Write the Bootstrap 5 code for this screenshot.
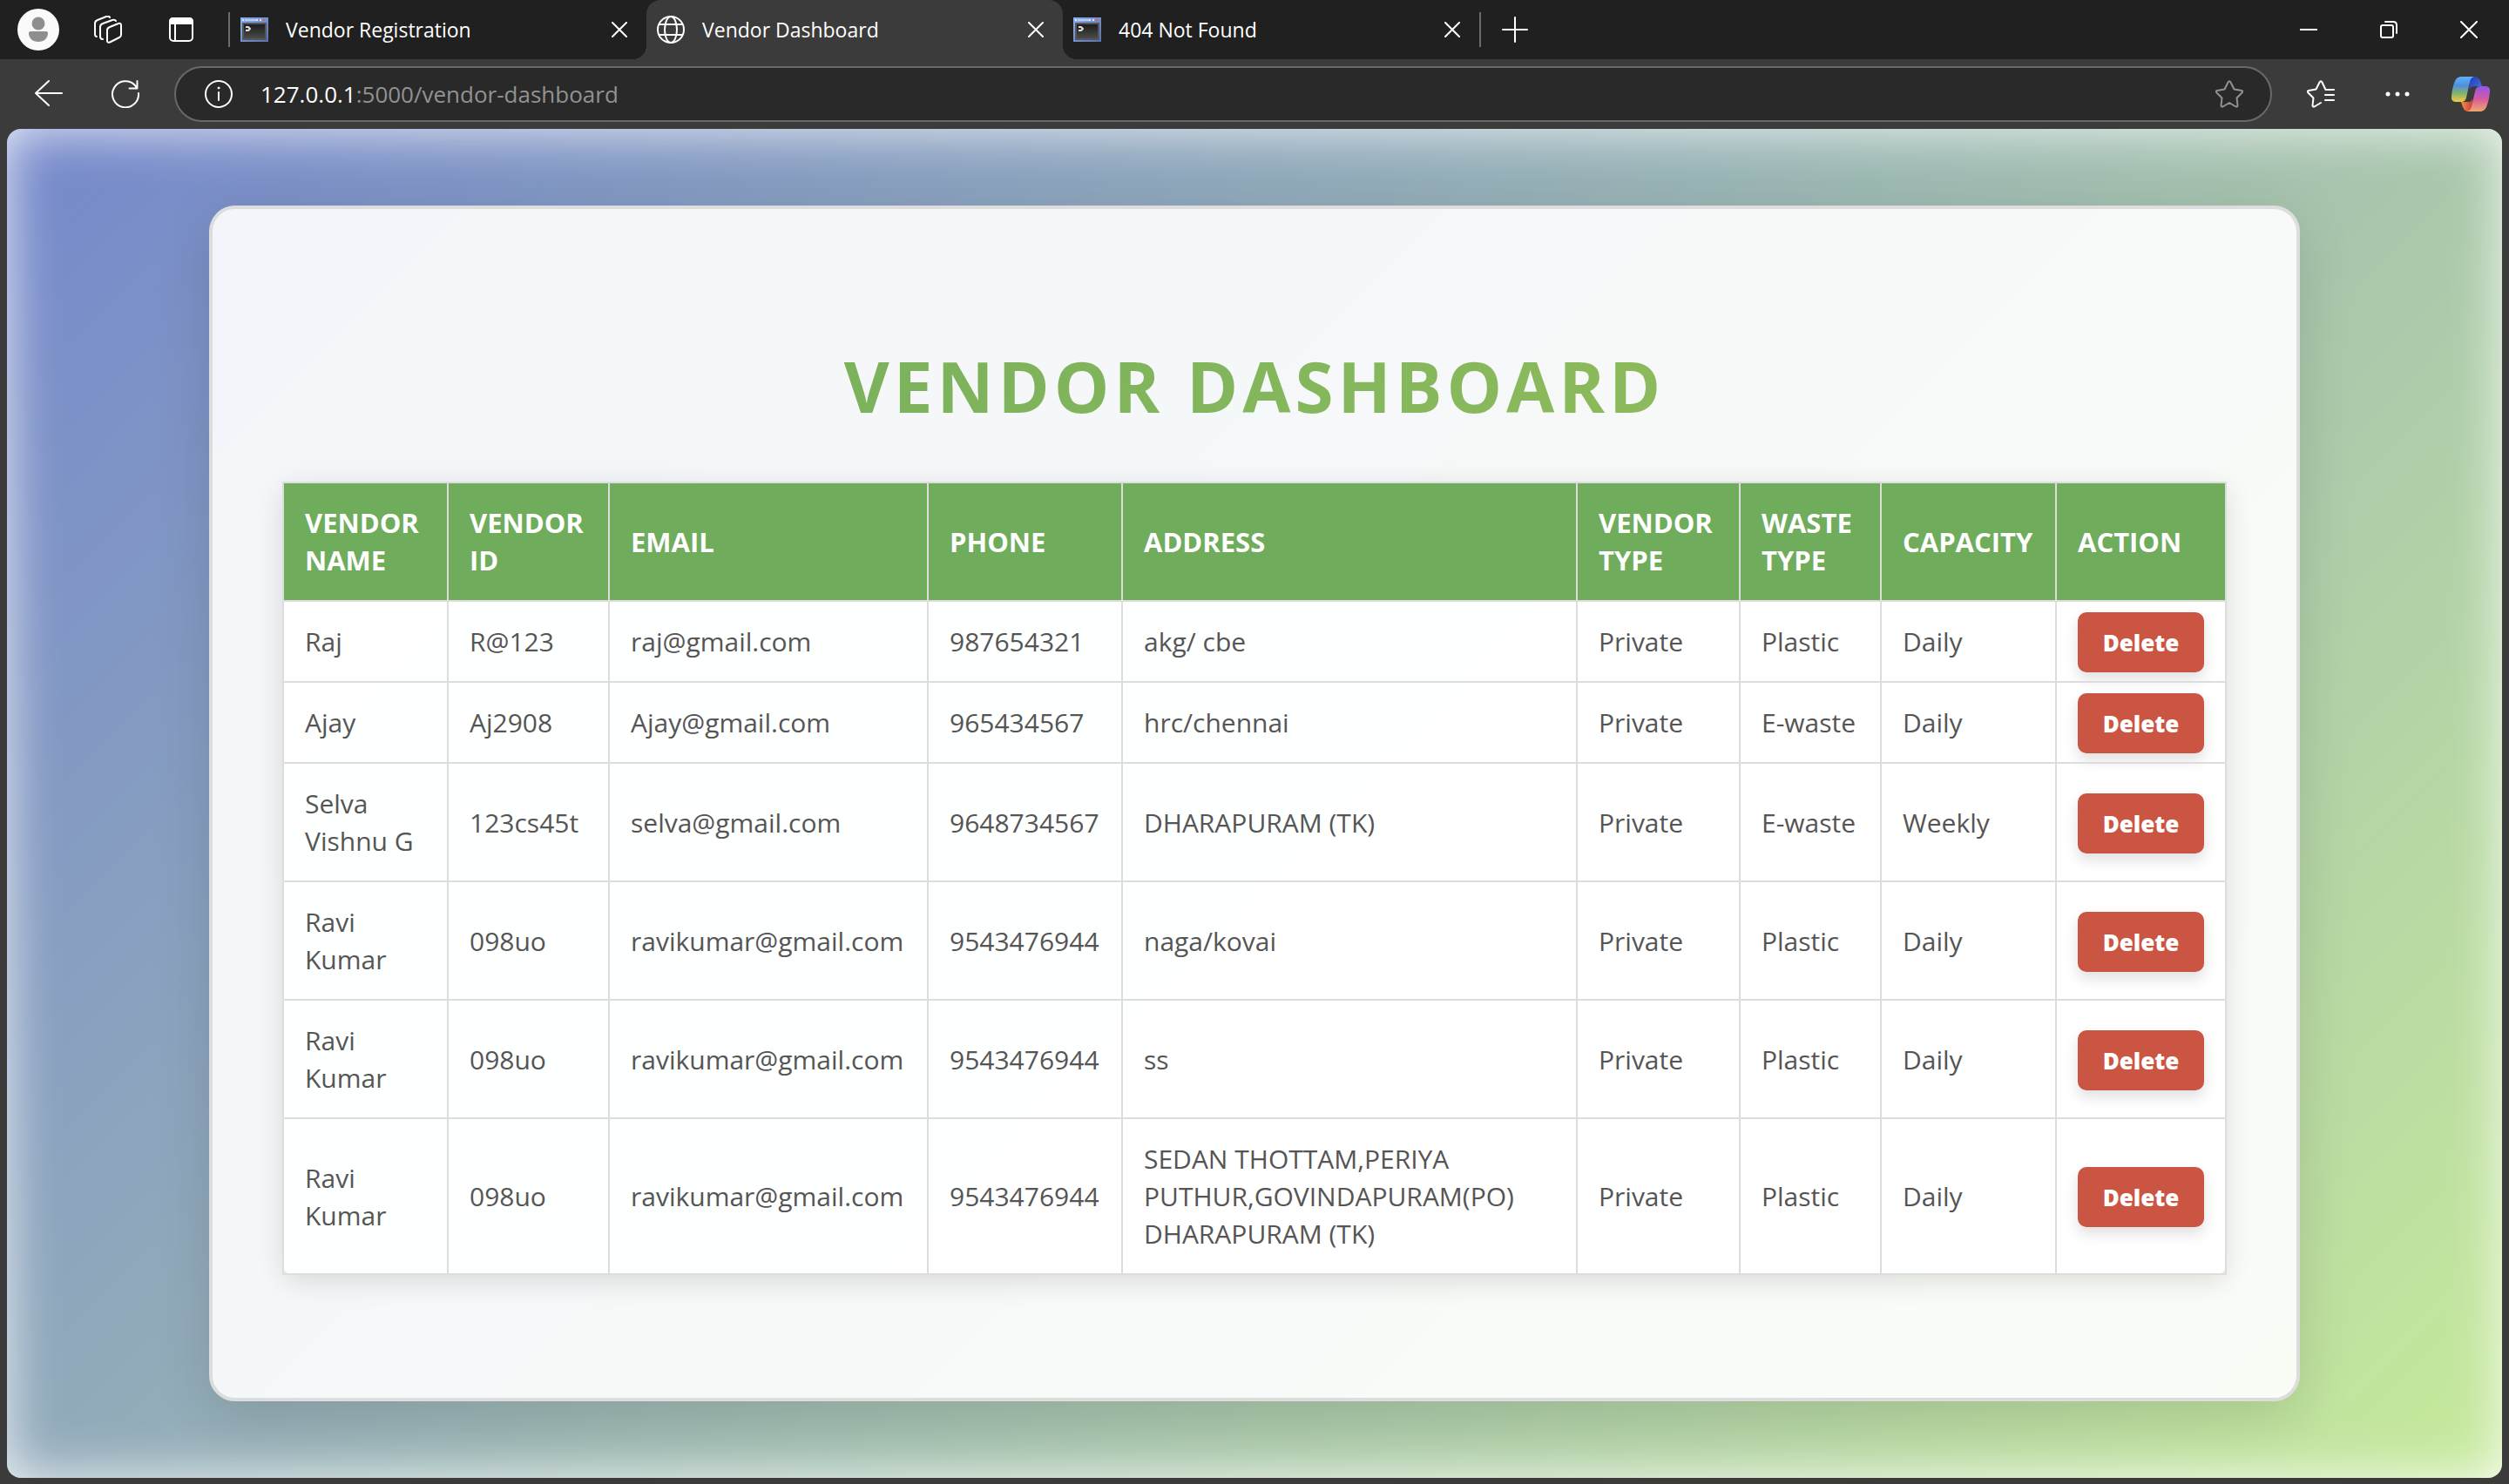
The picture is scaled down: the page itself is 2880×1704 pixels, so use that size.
<!DOCTYPE html>
<html lang="en">
<head>
<meta charset="utf-8">
<meta name="viewport" content="width=device-width, initial-scale=1">
<title>Vendor Dashboard</title>
<link href="https://cdn.jsdelivr.net/npm/bootstrap@5.3.0/dist/css/bootstrap.min.css" rel="stylesheet">
<style>
  body { font-family: "Open Sans", "Noto Sans", sans-serif; background: #3b3b3b; color: #fff; }
  svg { display: block; flex: none; fill: none; stroke: #fff; stroke-width: 2; stroke-linecap: round; stroke-linejoin: round; }
  .bare { border: 0; padding: 0; background: none; color: inherit; }

  /* tab strip */
  .tabstrip { height: 68px; background: #202020; font-size: 23px; padding-left: 20px; }
  .strip-tools { width: 242px; gap: 40px; }
  .tab-actions { margin-left: 14px; }
  .browser-tab { width: 478px; height: 68px; padding: 0 22px 0 12px; gap: 20px; color: #fff; text-decoration: none; }
  .browser-tab.current { background: #3b3b3b; border-radius: 16px 16px 0 0; position: relative; }
  .browser-tab.current::before, .browser-tab.current::after {
    content: ""; position: absolute; bottom: 0; width: 16px; height: 16px; }
  .browser-tab.current::before { left: -16px; background: radial-gradient(circle at 0 0, transparent 16px, #3b3b3b 16px); }
  .browser-tab.current::after { right: -16px; background: radial-gradient(circle at 100% 0, transparent 16px, #3b3b3b 16px); }
  .tab-rule { width: 2px; height: 40px; background: #6b6b6b; }
  .window-keys { gap: 72px; padding-right: 36px; }

  /* toolbar */
  .toolbar { height: 80px; padding: 8px 20px 8px 40px; }
  .addressbar { height: 64px; margin: 0 40px; padding: 0 31px 0 33px; border: 2px solid #696969; border-radius: 32px; background: #292929; }
  .addressbar .url { font-size: 26px; color: #929292; margin-left: 32px; }
  .dim-icon { stroke: #929292; }
  .copilot { margin-left: 44px; }

  /* page */
  .viewport-pane { margin: 0 8px 8px; padding: 88px 0; border-radius: 16px; min-height: calc(100vh - 156px);
    background: linear-gradient(135deg, #7588cc, #c6ea9b); box-shadow: inset 0 0 60px rgba(255,255,255,.85); color: #555; }
  .dash-panel { width: 2400px; max-width: 94%; padding: 148px 80px 141px; border: 4px solid #ddd; border-radius: 30px;
    background: rgba(255,255,255,.91); box-shadow: 0 16px 64px rgba(0,0,0,.13); }
  .dash-title { margin: 0 0 56px; font-size: 80px; line-height: 109px; font-weight: 700; letter-spacing: 5px; text-align: center;
    text-transform: uppercase; background: linear-gradient(135deg, #6fac5c, #98c05c); -webkit-background-clip: text; background-clip: text; color: transparent; }
  .vendors { table-layout: fixed; margin: 0; font-size: 30px; line-height: 43px; width: 100%; border-collapse: collapse;
    border-radius: 14px; background: rgba(255,255,255,.9); box-shadow: 0 8px 32px rgba(0,0,0,.12); }
  .vendors th, .vendors td { padding: 24px; border: 2px solid #ddd; vertical-align: middle; }
  .vendors th { background: #6fac5c; color: #fff; font-size: 31px; text-transform: uppercase; font-weight: 700; padding-right: 8px; }
  .vendors td.act { padding-top: 12px; padding-bottom: 10px; }
  .c-name { width: 189px; } .c-id { width: 185px; } .c-email { width: 366px; } .c-phone { width: 223px; }
  .c-type { width: 187px; } .c-waste { width: 162px; } .c-cap { width: 201px; } .c-act { width: 195px; }
  .del { display: block; width: 145px; height: 69px; padding: 2px 0 0; border: 0; border-radius: 10px; background: #cb5543; color: #fff;
    font-size: 26px; font-weight: 800; box-shadow: 0 8px 16px rgba(0,0,0,.12); }
</style>
</head>
<body>
<svg width="0" height="0" class="position-absolute" aria-hidden="true">
  <defs>
    <linearGradient id="frame" x2="1" y2="1"><stop stop-color="#8fb0ea"/><stop offset="1" stop-color="#5a6fae"/></linearGradient>
    <linearGradient id="screen" x2="0" y2="1"><stop stop-color="#1d1d1d"/><stop offset="1" stop-color="#4a4a4a"/></linearGradient>
    <linearGradient id="cpA" x2="0" y2="1"><stop stop-color="#5cb4f5"/><stop offset=".35" stop-color="#4f8fe0"/><stop offset=".65" stop-color="#7fb36c"/><stop offset="1" stop-color="#f5c842"/></linearGradient>
    <linearGradient id="cpB" x2="0" y2="1"><stop stop-color="#9355ea"/><stop offset=".5" stop-color="#d55aa0"/><stop offset="1" stop-color="#f0a868"/></linearGradient>
    <linearGradient id="cpC" x2="1" y2="1"><stop stop-color="#2535b5"/><stop offset="1" stop-color="#4078e0"/></linearGradient>
    <linearGradient id="cpD" x2="1" y2="0"><stop stop-color="#f09040"/><stop offset="1" stop-color="#c83e40"/></linearGradient>
    <symbol id="console" viewBox="0 0 32 28">
      <path d="M0 0h32v28H0z" fill="url(#frame)" stroke="none"/><path d="M2 2h2v2H2zM18 2h2v2h-2zM22 2h2v2h-2z" fill="#dce8ff" stroke="none"/><path d="M5 3h13" stroke="#b4ccf8" stroke-linecap="butt"/>
      <path d="M26 2h2v2h-2z" fill="#f05a30" stroke="none"/><path d="M2 6h28v20H2z" fill="#555" stroke="none"/><path d="M4 8h24v16H4z" fill="url(#screen)" stroke="none"/>
      <path d="M6 11h3l2 2-2 2H6" stroke="#ddd" stroke-linecap="butt"/>
    </symbol>
    <symbol id="cross" viewBox="0 0 18 18"><path d="M1 1l16 16M17 1L1 17"/></symbol>
  </defs>
</svg>

<header>
  <nav class="tabstrip d-flex align-items-center" aria-label="Browser tabs">
    <div class="strip-tools d-flex align-items-center">
      <button class="bare" aria-label="Profile"><svg width="48" height="48"><g stroke="none"><circle cx="24" cy="24" r="24" fill="#fafafa"/><circle cx="24" cy="17" r="7.5" fill="#8e8e8e"/><path d="M15 26h18q2 0 2 2c0 6-4.500 10-11 10s-11-4-11-10q0-2 2-2z" fill="#8e8e8e"/></g></svg></button>
      <button class="bare" aria-label="Workspaces"><svg width="32" height="32"><path d="M18 13l10-4q3-1 3 2v11q0 2-2 3l-11 5.500q-3 1-3-2V17q0-3 3-4zM10 27q-3 0-3-3V13q0-3 3-4l11-4q3-1 4 1M3 24q-2 0-2-3V9q0-3 3-4L14 1q3-1 4 1"/></svg></button>
      <button class="bare tab-actions" aria-label="Tab actions"><svg width="28" height="28"><rect x="1" y="1" width="26" height="26" rx="4"/><path d="M1 7V5q0-4 4-4h18q4 0 4 4v2z" fill="#fff"/><path d="M7 8v19"/></svg></button>
    </div>
    <span class="tab-rule"></span>
    <a href="#" class="browser-tab d-flex align-items-center"><svg width="32" height="28"><use href="#console"/></svg><span class="flex-grow-1">Vendor Registration</span><svg width="18" height="18"><use href="#cross"/></svg></a>
    <a href="#" class="browser-tab current d-flex align-items-center"><svg width="32" height="32"><circle cx="16" cy="16" r="15"/><ellipse cx="16" cy="16" rx="7" ry="15"/><path d="M3 10h26M3 22h26"/></svg><span class="flex-grow-1">Vendor Dashboard</span><svg width="18" height="18"><use href="#cross"/></svg></a>
    <a href="#" class="browser-tab d-flex align-items-center"><svg width="32" height="28"><use href="#console"/></svg><span class="flex-grow-1">404 Not Found</span><svg width="18" height="18"><use href="#cross"/></svg></a>
    <span class="tab-rule"></span>
    <button class="bare ms-4" aria-label="New tab"><svg width="30" height="30"><path d="M15 1v28M1 15h28"/></svg></button>
    <div class="window-keys d-flex ms-auto">
      <button class="bare" aria-label="Minimize"><svg width="20" height="20"><path d="M0 10h20"/></svg></button>
      <button class="bare" aria-label="Restore"><svg width="20" height="20"><rect x="1" y="5" width="14" height="14" rx="2"/><path d="M6 1h9q4 0 4 4v9"/></svg></button>
      <button class="bare" aria-label="Close"><svg width="20" height="20"><path d="M1 1l18 18M19 1L1 19"/></svg></button>
    </div>
  </nav>
  <div class="toolbar d-flex align-items-center">
    <button class="bare" aria-label="Back"><svg width="32" height="32"><path d="M31 15H1M16 1L1 15l15 14"/></svg></button>
    <button class="bare ms-5 ps-2" aria-label="Refresh"><svg width="32" height="32"><path d="M31 15A15 15 0 1 1 27 6l2 3M29.500 1v8.500h-9"/></svg></button>
    <div class="addressbar d-flex align-items-center flex-grow-1">
      <svg width="32" height="32"><circle cx="16" cy="16" r="15"/><path d="M16 14v9"/><circle cx="16" cy="9" r="1" fill="#fff" stroke-width="1"/></svg>
      <span class="url flex-grow-1"><span class="text-white">127.0.0.1</span>:5000/vendor-dashboard</span>
      <button class="bare" aria-label="Add to favorites"><svg class="dim-icon" width="32" height="32"><path d="M14.500 2.500q1.500-2.500 3 0l4 8 8.500 1.500q2 .8.500 2.500l-6 6 1 8.500q-.3 2-2 1.500L16 26l-7.500 4.500q-1.700.5-2-1.500l1-8.500-6-6Q0 12.800 2 12l8.500-1.500z"/></svg></button>
    </div>
    <button class="bare" aria-label="Favorites"><svg width="32" height="32"><path d="M31 11H21.500l-4-8.500q-1.500-2.500-3 0l-4 8L2 12q-2 .8-.5 2.500l6 6-1 8.500q.3 2 2 1.500L16 26M21 17h10M21 23h10"/></svg></button>
    <button class="bare ms-5 ps-2" aria-label="Settings and more"><svg width="32" height="32"><g fill="#fff" stroke="none"><circle cx="5" cy="16" r="2.500"/><circle cx="16" cy="16" r="2.500"/><circle cx="27" cy="16" r="2.500"/></g></svg></button>
    <button class="bare copilot" aria-label="Copilot"><svg width="48" height="40"><g stroke="none" transform="translate(2)"><path d="M20 0h6q5 0 7 5l2 6h-9q-4 0-5 4z" fill="url(#cpC)"/><path d="M24 40h-5q-4 0-6-5l-2-6h9q3 0 4-4z" fill="url(#cpD)"/><path d="M12 0h14q-4 1-5 6l-4 18q-1 5-6 5H5q-6 0-5-7Q1 12 4 5q2-5 8-5z" fill="url(#cpA)"/><path d="M32 40H18q4-1 5-6l4-17q1-6 6-6h6q6 0 5 7-1 10-4 17-2 5-8 5z" fill="url(#cpB)"/></g></svg></button>
  </div>
</header>

<main class="viewport-pane">
  <section class="dash-panel mx-auto">
    <h1 class="dash-title">Vendor Dashboard</h1>
    <table class="vendors">
      <colgroup><col class="c-name"><col class="c-id"><col class="c-email"><col class="c-phone"><col><col class="c-type"><col class="c-waste"><col class="c-cap"><col class="c-act"></colgroup>
      <thead>
        <tr><th scope="col">Vendor Name</th><th scope="col">Vendor ID</th><th scope="col">Email</th><th scope="col">Phone</th><th scope="col">Address</th><th scope="col">Vendor Type</th><th scope="col">Waste Type</th><th scope="col">Capacity</th><th scope="col">Action</th></tr>
      </thead>
      <tbody>
        <tr><td>Raj</td><td>R@123</td><td>raj@gmail.com</td><td>987654321</td><td>akg/ cbe</td><td>Private</td><td>Plastic</td><td>Daily</td><td class="act"><button class="del">Delete</button></td></tr>
        <tr><td>Ajay</td><td>Aj2908</td><td>Ajay@gmail.com</td><td>965434567</td><td>hrc/chennai</td><td>Private</td><td>E-waste</td><td>Daily</td><td class="act"><button class="del">Delete</button></td></tr>
        <tr><td>Selva Vishnu G</td><td>123cs45t</td><td>selva@gmail.com</td><td>9648734567</td><td>DHARAPURAM (TK)</td><td>Private</td><td>E-waste</td><td>Weekly</td><td class="act"><button class="del">Delete</button></td></tr>
        <tr><td>Ravi Kumar</td><td>098uo</td><td>ravikumar@gmail.com</td><td>9543476944</td><td>naga/kovai</td><td>Private</td><td>Plastic</td><td>Daily</td><td class="act"><button class="del">Delete</button></td></tr>
        <tr><td>Ravi Kumar</td><td>098uo</td><td>ravikumar@gmail.com</td><td>9543476944</td><td>ss</td><td>Private</td><td>Plastic</td><td>Daily</td><td class="act"><button class="del">Delete</button></td></tr>
        <tr><td>Ravi Kumar</td><td>098uo</td><td>ravikumar@gmail.com</td><td>9543476944</td><td>SEDAN THOTTAM,PERIYA PUTHUR,GOVINDAPURAM(PO) DHARAPURAM (TK)</td><td>Private</td><td>Plastic</td><td>Daily</td><td class="act"><button class="del">Delete</button></td></tr>
      </tbody>
    </table>
  </section>
</main>
<script src="https://cdn.jsdelivr.net/npm/bootstrap@5.3.0/dist/js/bootstrap.bundle.min.js"></script>
</body>
</html>
